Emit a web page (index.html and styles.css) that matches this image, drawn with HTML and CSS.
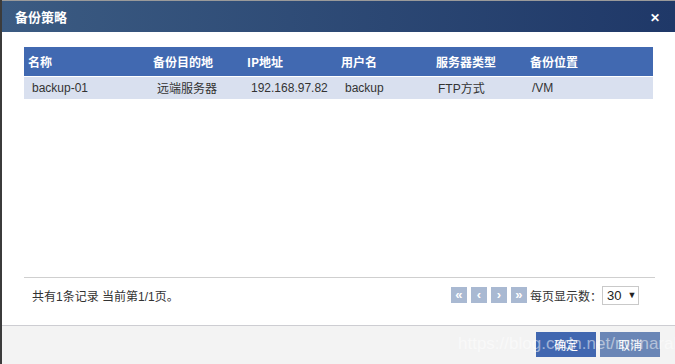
FILE: index.html
```html
<!DOCTYPE html>
<html lang="zh-CN">
<head>
    <meta charset="UTF-8">
    <title>备份策略</title>
    <link rel="stylesheet" href="styles.css">
</head>
<body>
    <div class="dialog">
        <div class="dialog-head">
            <span class="dialog-title">备份策略</span>
            <span class="dialog-close">&#10005;</span>
        </div>

        <div class="dialog-body">
            <div class="grid-wrap">
                <table class="grid">
                    <colgroup>
                        <col style="width: 125px">
                        <col style="width: 94px">
                        <col style="width: 94px">
                        <col style="width: 95px">
                        <col style="width: 94px">
                        <col>
                    </colgroup>
                    <thead>
                        <tr>
                            <th>名称</th>
                            <th>备份目的地</th>
                            <th>IP地址</th>
                            <th>用户名</th>
                            <th>服务器类型</th>
                            <th>备份位置</th>
                        </tr>
                    </thead>
                    <tbody>
                        <tr>
                            <td>backup-01</td>
                            <td>远端服务器</td>
                            <td>192.168.97.82</td>
                            <td>backup</td>
                            <td class="tight">FTP方式</td>
                            <td class="tight">/VM</td>
                        </tr>
                    </tbody>
                </table>
            </div>

            <div class="pager">
                <span class="pager-info">共有1条记录 当前第1/1页。</span>
                <div class="pager-right">
                    <span class="pg-btn">&laquo;</span>
                    <span class="pg-btn">&lsaquo;</span>
                    <span class="pg-btn">&rsaquo;</span>
                    <span class="pg-btn">&raquo;</span>
                    <span class="pg-label">每页显示数：</span>
                    <span class="pg-select">30<i>&#9660;</i></span>
                </div>
            </div>
        </div>

        <div class="dialog-foot">
            <button class="btn btn-ok">确定</button>
            <button class="btn btn-cancel">取消</button>
            <span class="watermark">https://blog.csdn.net/ronnarah</span>
        </div>
    </div>
</body>
</html>
```

FILE: styles.css
```css
* {
    box-sizing: border-box;
}

html, body {
    margin: 0;
    padding: 0;
    height: 100%;
}

body {
    background: #3b3b3b;
    font-family: "Liberation Sans", "Noto Sans CJK SC", sans-serif;
    font-size: 12px;
    color: #333;
}

.dialog {
    margin-left: 2px;
    height: 364px;
    border-top: 1px solid #9a9a9a;
    background: #fff;
    display: flex;
    flex-direction: column;
}

.dialog-head {
    height: 31px;
    padding: 0 15px 0 13px;
    display: flex;
    align-items: center;
    justify-content: space-between;
    background: linear-gradient(to right, #3b5b82, #1f3868);
    color: #fff;
}

.dialog-title {
    font-size: 13px;
    font-weight: bold;
    font-family: "Noto Sans CJK SC", sans-serif;
}

.dialog-close {
    font-size: 12px;
    font-weight: bold;
    margin-top: 2px;
}

.dialog-body {
    height: 293px;
    padding: 15px 20px 0 22px;
    display: flex;
    flex-direction: column;
}

.grid-wrap {
    height: 231px;
    border-bottom: 1px solid #cfcfcf;
}

.grid {
    width: 629px;
    border-collapse: collapse;
    table-layout: fixed;
}

.grid th {
    height: 29px;
    padding: 0 0 0 4px;
    text-align: left;
    background: #4169b1;
    color: #fff;
    font-weight: bold;
    font-family: "Noto Sans CJK SC", sans-serif;
    border-bottom: 1px solid #fff;
}

.grid td {
    height: 23px;
    padding: 0 0 0 8px;
    background: #d9e0ef;
    color: #333;
    white-space: nowrap;
}

.grid td.tight {
    padding-left: 6px;
}

.pager {
    height: 34px;
    display: flex;
    align-items: center;
    justify-content: space-between;
    padding: 0 16px 0 8px;
}

.pager-info {
    color: #333;
}

.pager-right {
    display: flex;
    align-items: center;
}

.pg-btn {
    width: 16px;
    height: 16px;
    margin-left: 4px;
    background: #a9b9d2;
    color: #fff;
    font-size: 13px;
    font-weight: bold;
    line-height: 15px;
    text-align: center;
}

.pg-label {
    margin-left: 3px;
    font-family: "Noto Sans CJK SC", sans-serif;
}

.pg-select {
    width: 37px;
    height: 19px;
    padding-left: 4px;
    border: 1px solid #c9c9c9;
    display: flex;
    align-items: center;
    white-space: nowrap;
    font-size: 13px;
    color: #222;
}

.pg-select i {
    font-style: normal;
    font-size: 9px;
    margin-left: 6px;
}

.dialog-foot {
    position: relative;
    flex: 1;
    border-top: 1px solid #cdcdd2;
    background: #f3f3f3;
    display: flex;
    justify-content: flex-end;
    align-items: flex-start;
    padding: 6px 15px 0 0;
}

.btn {
    width: 60px;
    height: 25px;
    margin-left: 4px;
    padding: 0;
    border: none;
    color: #fff;
    font-size: 12px;
    font-family: "Noto Sans CJK SC", sans-serif;
    cursor: pointer;
}

.btn-ok {
    background: #4167b0;
}

.btn-cancel {
    background: #6a86b6;
}

.watermark {
    position: absolute;
    left: 456px;
    top: 8px;
    font-size: 17px;
    color: rgba(255, 255, 255, 0.5);
    pointer-events: none;
}
```
